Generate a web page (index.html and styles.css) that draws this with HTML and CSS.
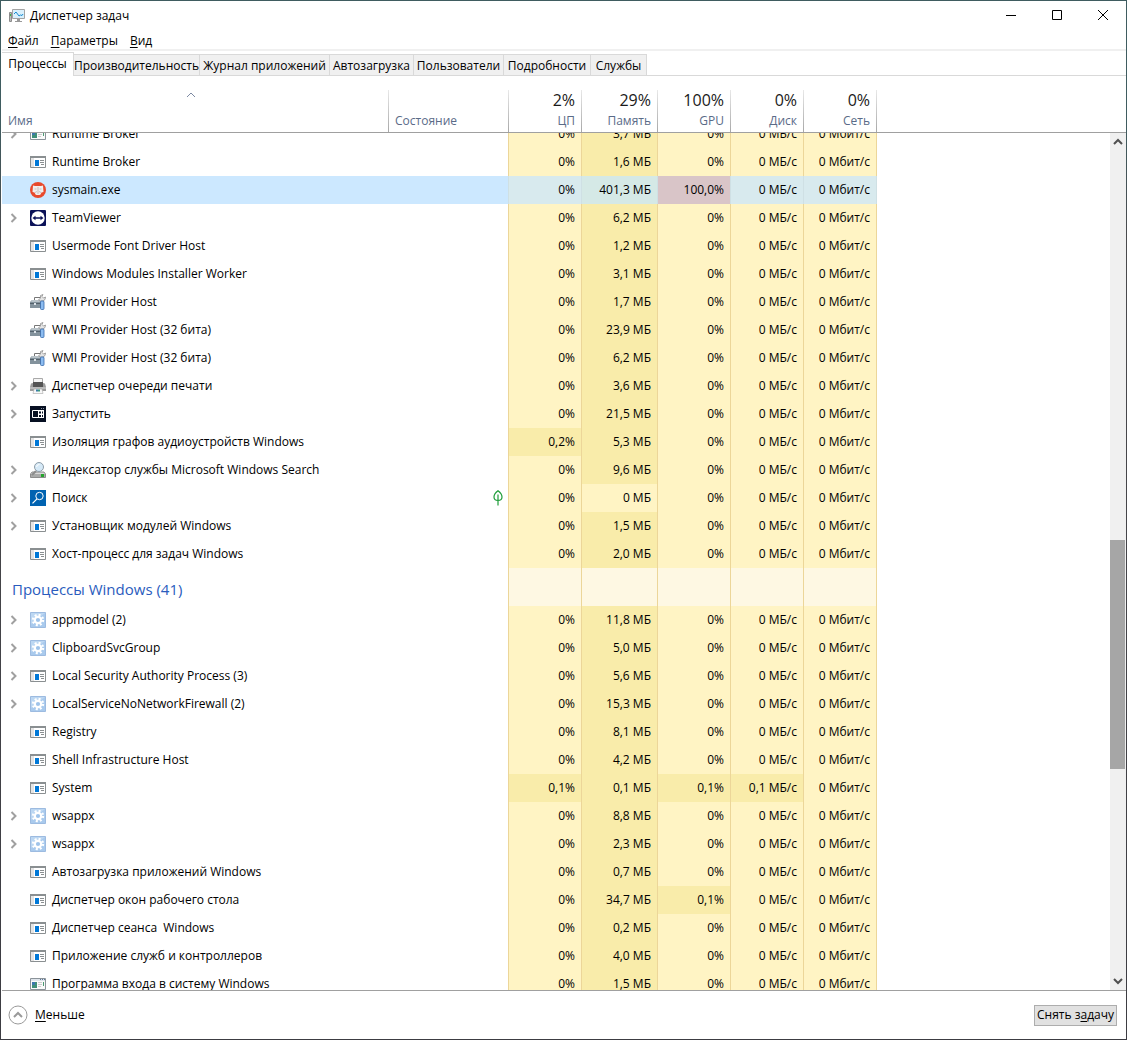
FILE: index.html
```html
<!DOCTYPE html>
<html lang="ru">
<head>
    <meta charset="UTF-8">
    <meta name="viewport" content="width=device-width, initial-scale=1.0">
    <title>Диспетчер задач</title>
    <link rel="stylesheet" href="styles.css">
</head>
<body>
    <!-- иконки -->
    <svg class="sprite" aria-hidden="true">
        <symbol id="i-arrow" viewBox="0 0 8 10">
            <path d="M1.500 1l4 4-4 4" fill="none" stroke="#a0a0a0" stroke-width="2"/>
        </symbol>
        <symbol id="i-app" viewBox="0 0 16 16">
            <path d="M.5 2.500h15v11H.5z" fill="#fff" stroke="#8a8f91"/>
            <path d="M0 2h16v2H0z" fill="#8a8f91"/>
            <path d="M1 4h3v9H1z" fill="#e4e4e4"/>
            <path d="M5 6h4v6H5z" fill="#0078d7"/>
            <path d="M10 6.500h4M10 8.500h4M11 10.500h3" stroke="#8a8f91"/>
        </symbol>
        <symbol id="i-old" viewBox="0 0 16 16">
            <path d="M.5 2.500h15v11H.5z" fill="#fafafa" stroke="#8b9399"/>
            <path d="M1 3h14v2H1z" fill="#dfe5ec"/>
            <path d="M10 3.500h1M12 3.500h1M14 3.500h1" stroke="#5f7897"/>
            <path d="M2 6h5v6H2z" fill="#3f8f78"/>
            <path d="M2 6h3v3H2z" fill="#3d77ad"/>
            <path d="M8 6.500h4M8 8.500h4M8 10.500h3" stroke="#ccc"/>
            <path d="M13.500 6v4" stroke="#4b9a72"/>
        </symbol>
        <symbol id="i-sysmain" viewBox="0 0 16 16">
            <circle cx="8" cy="8" r="8" fill="#e8492c"/>
            <path d="M3 3.500l2 .5h6l2-.5.5 6.500-2 .500-1 2-1 .5H6.500l-1-.5-1-2-2-.5z" fill="#f1eeee"/>
            <path d="M4.500 7h2M9.500 7h2" stroke="#cfc0bd"/>
            <path d="M8 5v7M5.500 11l1-2M10.500 11l-1-2" stroke="#c9bcba" fill="none"/>
        </symbol>
        <symbol id="i-tv" viewBox="0 0 16 16">
            <rect width="16" height="16" rx="1" fill="#0b1258"/>
            <circle cx="8" cy="8" r="6.700" fill="#fff"/>
            <path d="M2.500 8L5.500 5.700v1.500h5V5.700L13.500 8l-3 2.300V8.800h-5v1.500z" fill="#0b1258"/>
        </symbol>
        <symbol id="i-wmi" viewBox="0 0 16 16">
            <path d="M4.500 6V3.500h6" fill="none" stroke="#777"/>
            <path d="M2 6h11l1 2v6H0V8z" fill="#83929c"/>
            <path d="M2 6h9l1 2H1z" fill="#b9c3c9"/>
            <path d="M0 9.500h11" stroke="#53616b"/>
            <path d="M4 9h2v2H4z" fill="#dce3e8"/>
            <path d="M8.500 6l2-2V1.500L13 .5l-1 2 1.500 1.500 2-1-.5 2.500-2 1.500H10z" fill="#e4e4e4" stroke="#858585" stroke-width=".7"/>
            <rect x="10.500" y="7" width="3.500" height="8.500" rx="1" fill="#8cbcf0" stroke="#386aab" stroke-width=".8"/>
        </symbol>
        <symbol id="i-print" viewBox="0 0 16 16">
            <path d="M3.500.5h9v6h-9z" fill="#f5f5f5" stroke="#a9a9a9"/>
            <path d="M1 5.500l2-.5h10l2 .5 1 3.500v4H0V9z" fill="#9c9c9c"/>
            <path d="M3 4h10v5H3z" fill="#555"/>
            <path d="M0 9.500h16v1H0z" fill="#ddd"/>
            <path d="M4 11h8l1 4.500H3z" fill="#f7f7f7" stroke="#aaa" stroke-width=".6"/>
            <path d="M6 11.500h2v2H6z" fill="#3979a8"/>
            <path d="M8 11.500h2v2H8z" fill="#3c9b7b"/>
        </symbol>
        <symbol id="i-start" viewBox="0 0 16 16">
            <path d="M0 0h16v16H0z" fill="#071022"/>
            <path d="M2.500 4.500h11v7h-11z" fill="none" stroke="#fff"/>
            <path d="M8 4h6v8H8z" fill="#fff"/>
            <path d="M9 5.500h2v2H9zM12 5.500h1v2h-1zM9 9h2v2H9zM12 9h1v2h-1z" fill="#071022"/>
            <path d="M11 2.500h1M13 2.500h1" stroke="#8790a0"/>
        </symbol>
        <symbol id="i-index" viewBox="0 0 16 16">
            <path d="M2 10h12l1.500 2v3.500H.5V12z" fill="#d9d9d9" stroke="#757575" stroke-width=".8"/>
            <path d="M1 12h14v3H1z" fill="#a9aaa9"/>
            <path d="M11 12h3v3h-3z" fill="#24a52c"/>
            <path d="M6 9l-4 4" stroke="#8b8b8b" stroke-width="2"/>
            <circle cx="9" cy="5" r="4.500" fill="#d5e9f7" stroke="#8e9da8"/>
            <path d="M6.500 5a3 3 0 0 1 3-2.500" fill="none" stroke="#fff"/>
        </symbol>
        <symbol id="i-search" viewBox="0 0 16 16">
            <path d="M0 0h16v16H0z" fill="#0063b1"/>
            <circle cx="9.500" cy="6" r="3.700" fill="none" stroke="#fff"/>
            <path d="M7 8.800L2.500 13.300" stroke="#fff" stroke-width="1.200"/>
        </symbol>
        <symbol id="i-gear" viewBox="0 0 16 16">
            <path d="M.5.5h15v15H.5z" fill="#a9caed" stroke="#9dbbe0"/>
            <path d="M1 1h14L1 12z" fill="#bcd7f2"/>
            <circle cx="8" cy="8" r="5" fill="none" stroke="#fff" stroke-width="2.400" stroke-dasharray="1.960 1.960"/>
            <circle cx="8" cy="8" r="3.200" fill="#9fc3ea" stroke="#fff" stroke-width="2.200"/>
        </symbol>
        <symbol id="i-leaf" viewBox="0 0 10 16">
            <path d="M5 .8C2.500 2.700 1 4.500 1 7c0 2 1.500 3.500 4 3.500S9 9 9 7C9 4.500 7.500 2.700 5 .8zM5 4.500v11" fill="none" stroke="#1f9d3a" stroke-width="1.200"/>
        </symbol>
    </svg>

    <div class="window">
        <header class="titlebar">
            <svg class="app-icon" viewBox="0 0 16 16" aria-hidden="true">
                <path d="M.5 4.500h2v9h-2z" fill="#bcbcbc" stroke="#8c8c8c"/>
                <path d="M1 6h1v2H1z" fill="#39b54a"/>
                <path d="M3.500 1.500h12v9h-12z" fill="#d9f0fc" stroke="#a3a3a3"/>
                <path d="M5 6l2-2 3 4 1.500-1 1.500.5 1-1.500" fill="none" stroke="#178bd0"/>
                <path d="M8 11h3v2h2v1H6v-1h2z" fill="#999"/>
            </svg>
            <h1 class="title">Диспетчер задач</h1>
            <div class="window-buttons">
                <button type="button" aria-label="Свернуть"><svg viewBox="0 0 12 12"><path d="M1 5.500h10"/></svg></button>
                <button type="button" aria-label="Развернуть"><svg viewBox="0 0 12 12"><path d="M1.500.5h9v9h-9z"/></svg></button>
                <button type="button" aria-label="Закрыть"><svg viewBox="0 0 12 12"><path d="M1 0l10 10M11 0L1 10"/></svg></button>
            </div>
        </header>

        <nav class="menu">
            <button type="button"><u>Ф</u>айл</button>
            <button type="button"><u>П</u>араметры</button>
            <button type="button"><u>В</u>ид</button>
        </nav>

        <div class="tabs" role="tablist">
            <button type="button" class="tab active" role="tab" aria-selected="true">Процессы</button>
            <button type="button" class="tab" role="tab">Производительность</button>
            <button type="button" class="tab" role="tab">Журнал приложений</button>
            <button type="button" class="tab" role="tab">Автозагрузка</button>
            <button type="button" class="tab" role="tab">Пользователи</button>
            <button type="button" class="tab" role="tab">Подробности</button>
            <button type="button" class="tab" role="tab">Службы</button>
        </div>

        <main class="panel">
            <div class="list" id="list">
                <table class="processes">
                    <colgroup>
                        <col class="col-name"><col class="col-status"><col class="col-num"><col class="col-mem">
                        <col class="col-num"><col class="col-num"><col class="col-num"><col>
                    </colgroup>
                    <thead>
                        <tr>
                            <th class="left" aria-sort="ascending"><svg class="sort" viewBox="0 0 10 6" aria-hidden="true"><path d="M1 5l4-4 4 4"/></svg>Имя</th>
                            <th class="left">Состояние</th>
                            <th><b>2%</b>ЦП</th>
                            <th><b>29%</b>Память</th>
                            <th><b>100%</b>GPU</th>
                            <th><b>0%</b>Диск</th>
                            <th><b>0%</b>Сеть</th>
                            <th class="rest"></th>
                        </tr>
                    </thead>
                    <tbody>
                        <tr>
                            <td><div class="name"><button type="button" class="expand" aria-label="Развернуть"><svg><use href="#i-arrow"/></svg></button><svg class="icon"><use href="#i-old"/></svg>Runtime Broker</div></td>
                            <td></td><td>0%</td><td class="warm">3,7 МБ</td><td>0%</td><td>0 МБ/с</td><td>0 Мбит/с</td><td></td>
                        </tr>
                        <tr>
                            <td><div class="name"><svg class="icon"><use href="#i-app"/></svg>Runtime Broker</div></td>
                            <td></td><td>0%</td><td class="warm">1,6 МБ</td><td>0%</td><td>0 МБ/с</td><td>0 Мбит/с</td><td></td>
                        </tr>
                        <tr class="selected">
                            <td><div class="name"><svg class="icon"><use href="#i-sysmain"/></svg>sysmain.exe</div></td>
                            <td></td><td>0%</td><td class="warm">401,3 МБ</td><td class="hot">100,0%</td><td>0 МБ/с</td><td>0 Мбит/с</td><td></td>
                        </tr>
                        <tr>
                            <td><div class="name"><button type="button" class="expand" aria-label="Развернуть"><svg><use href="#i-arrow"/></svg></button><svg class="icon"><use href="#i-tv"/></svg>TeamViewer</div></td>
                            <td></td><td>0%</td><td class="warm">6,2 МБ</td><td>0%</td><td>0 МБ/с</td><td>0 Мбит/с</td><td></td>
                        </tr>
                        <tr>
                            <td><div class="name"><svg class="icon"><use href="#i-app"/></svg>Usermode Font Driver Host</div></td>
                            <td></td><td>0%</td><td class="warm">1,2 МБ</td><td>0%</td><td>0 МБ/с</td><td>0 Мбит/с</td><td></td>
                        </tr>
                        <tr>
                            <td><div class="name"><svg class="icon"><use href="#i-app"/></svg>Windows Modules Installer Worker</div></td>
                            <td></td><td>0%</td><td class="warm">3,1 МБ</td><td>0%</td><td>0 МБ/с</td><td>0 Мбит/с</td><td></td>
                        </tr>
                        <tr>
                            <td><div class="name"><svg class="icon"><use href="#i-wmi"/></svg>WMI Provider Host</div></td>
                            <td></td><td>0%</td><td class="warm">1,7 МБ</td><td>0%</td><td>0 МБ/с</td><td>0 Мбит/с</td><td></td>
                        </tr>
                        <tr>
                            <td><div class="name"><svg class="icon"><use href="#i-wmi"/></svg>WMI Provider Host (32 бита)</div></td>
                            <td></td><td>0%</td><td class="warm">23,9 МБ</td><td>0%</td><td>0 МБ/с</td><td>0 Мбит/с</td><td></td>
                        </tr>
                        <tr>
                            <td><div class="name"><svg class="icon"><use href="#i-wmi"/></svg>WMI Provider Host (32 бита)</div></td>
                            <td></td><td>0%</td><td class="warm">6,2 МБ</td><td>0%</td><td>0 МБ/с</td><td>0 Мбит/с</td><td></td>
                        </tr>
                        <tr>
                            <td><div class="name"><button type="button" class="expand" aria-label="Развернуть"><svg><use href="#i-arrow"/></svg></button><svg class="icon"><use href="#i-print"/></svg>Диспетчер очереди печати</div></td>
                            <td></td><td>0%</td><td class="warm">3,6 МБ</td><td>0%</td><td>0 МБ/с</td><td>0 Мбит/с</td><td></td>
                        </tr>
                        <tr>
                            <td><div class="name"><button type="button" class="expand" aria-label="Развернуть"><svg><use href="#i-arrow"/></svg></button><svg class="icon"><use href="#i-start"/></svg>Запустить</div></td>
                            <td></td><td>0%</td><td class="warm">21,5 МБ</td><td>0%</td><td>0 МБ/с</td><td>0 Мбит/с</td><td></td>
                        </tr>
                        <tr>
                            <td><div class="name"><svg class="icon"><use href="#i-app"/></svg>Изоляция графов аудиоустройств Windows</div></td>
                            <td></td><td class="warm">0,2%</td><td class="warm">5,3 МБ</td><td>0%</td><td>0 МБ/с</td><td>0 Мбит/с</td><td></td>
                        </tr>
                        <tr>
                            <td><div class="name"><button type="button" class="expand" aria-label="Развернуть"><svg><use href="#i-arrow"/></svg></button><svg class="icon"><use href="#i-index"/></svg>Индексатор службы Microsoft Windows Search</div></td>
                            <td></td><td>0%</td><td class="warm">9,6 МБ</td><td>0%</td><td>0 МБ/с</td><td>0 Мбит/с</td><td></td>
                        </tr>
                        <tr>
                            <td><div class="name"><button type="button" class="expand" aria-label="Развернуть"><svg><use href="#i-arrow"/></svg></button><svg class="icon"><use href="#i-search"/></svg>Поиск</div></td>
                            <td><svg class="leaf"><use href="#i-leaf"/></svg></td><td>0%</td><td>0 МБ</td><td>0%</td><td>0 МБ/с</td><td>0 Мбит/с</td><td></td>
                        </tr>
                        <tr>
                            <td><div class="name"><button type="button" class="expand" aria-label="Развернуть"><svg><use href="#i-arrow"/></svg></button><svg class="icon"><use href="#i-app"/></svg>Установщик модулей Windows</div></td>
                            <td></td><td>0%</td><td class="warm">1,5 МБ</td><td>0%</td><td>0 МБ/с</td><td>0 Мбит/с</td><td></td>
                        </tr>
                        <tr>
                            <td><div class="name"><svg class="icon"><use href="#i-app"/></svg>Хост-процесс для задач Windows</div></td>
                            <td></td><td>0%</td><td class="warm">2,0 МБ</td><td>0%</td><td>0 МБ/с</td><td>0 Мбит/с</td><td></td>
                        </tr>

                        <!-- процессы Windows -->
                        <tr class="group">
                            <td>Процессы Windows (41)</td><td></td><td></td><td></td><td></td><td></td><td></td><td></td>
                        </tr>
                        <tr>
                            <td><div class="name"><button type="button" class="expand" aria-label="Развернуть"><svg><use href="#i-arrow"/></svg></button><svg class="icon"><use href="#i-gear"/></svg>appmodel (2)</div></td>
                            <td></td><td>0%</td><td class="warm">11,8 МБ</td><td>0%</td><td>0 МБ/с</td><td>0 Мбит/с</td><td></td>
                        </tr>
                        <tr>
                            <td><div class="name"><button type="button" class="expand" aria-label="Развернуть"><svg><use href="#i-arrow"/></svg></button><svg class="icon"><use href="#i-gear"/></svg>ClipboardSvcGroup</div></td>
                            <td></td><td>0%</td><td class="warm">5,0 МБ</td><td>0%</td><td>0 МБ/с</td><td>0 Мбит/с</td><td></td>
                        </tr>
                        <tr>
                            <td><div class="name"><button type="button" class="expand" aria-label="Развернуть"><svg><use href="#i-arrow"/></svg></button><svg class="icon"><use href="#i-app"/></svg>Local Security Authority Process (3)</div></td>
                            <td></td><td>0%</td><td class="warm">5,6 МБ</td><td>0%</td><td>0 МБ/с</td><td>0 Мбит/с</td><td></td>
                        </tr>
                        <tr>
                            <td><div class="name"><button type="button" class="expand" aria-label="Развернуть"><svg><use href="#i-arrow"/></svg></button><svg class="icon"><use href="#i-gear"/></svg>LocalServiceNoNetworkFirewall (2)</div></td>
                            <td></td><td>0%</td><td class="warm">15,3 МБ</td><td>0%</td><td>0 МБ/с</td><td>0 Мбит/с</td><td></td>
                        </tr>
                        <tr>
                            <td><div class="name"><svg class="icon"><use href="#i-app"/></svg>Registry</div></td>
                            <td></td><td>0%</td><td class="warm">8,1 МБ</td><td>0%</td><td>0 МБ/с</td><td>0 Мбит/с</td><td></td>
                        </tr>
                        <tr>
                            <td><div class="name"><svg class="icon"><use href="#i-app"/></svg>Shell Infrastructure Host</div></td>
                            <td></td><td>0%</td><td class="warm">4,2 МБ</td><td>0%</td><td>0 МБ/с</td><td>0 Мбит/с</td><td></td>
                        </tr>
                        <tr>
                            <td><div class="name"><svg class="icon"><use href="#i-app"/></svg>System</div></td>
                            <td></td><td class="warm">0,1%</td><td class="warm">0,1 МБ</td><td class="warm">0,1%</td><td class="warm">0,1 МБ/с</td><td>0 Мбит/с</td><td></td>
                        </tr>
                        <tr>
                            <td><div class="name"><button type="button" class="expand" aria-label="Развернуть"><svg><use href="#i-arrow"/></svg></button><svg class="icon"><use href="#i-gear"/></svg>wsappx</div></td>
                            <td></td><td>0%</td><td class="warm">8,8 МБ</td><td>0%</td><td>0 МБ/с</td><td>0 Мбит/с</td><td></td>
                        </tr>
                        <tr>
                            <td><div class="name"><button type="button" class="expand" aria-label="Развернуть"><svg><use href="#i-arrow"/></svg></button><svg class="icon"><use href="#i-gear"/></svg>wsappx</div></td>
                            <td></td><td>0%</td><td class="warm">2,3 МБ</td><td>0%</td><td>0 МБ/с</td><td>0 Мбит/с</td><td></td>
                        </tr>
                        <tr>
                            <td><div class="name"><svg class="icon"><use href="#i-app"/></svg>Автозагрузка приложений Windows</div></td>
                            <td></td><td>0%</td><td class="warm">0,7 МБ</td><td>0%</td><td>0 МБ/с</td><td>0 Мбит/с</td><td></td>
                        </tr>
                        <tr>
                            <td><div class="name"><svg class="icon"><use href="#i-app"/></svg>Диспетчер окон рабочего стола</div></td>
                            <td></td><td>0%</td><td class="warm">34,7 МБ</td><td class="warm">0,1%</td><td>0 МБ/с</td><td>0 Мбит/с</td><td></td>
                        </tr>
                        <tr>
                            <td><div class="name"><svg class="icon"><use href="#i-app"/></svg>Диспетчер сеанса&nbsp; Windows</div></td>
                            <td></td><td>0%</td><td class="warm">0,2 МБ</td><td>0%</td><td>0 МБ/с</td><td>0 Мбит/с</td><td></td>
                        </tr>
                        <tr>
                            <td><div class="name"><svg class="icon"><use href="#i-app"/></svg>Приложение служб и контроллеров</div></td>
                            <td></td><td>0%</td><td class="warm">4,0 МБ</td><td>0%</td><td>0 МБ/с</td><td>0 Мбит/с</td><td></td>
                        </tr>
                        <tr>
                            <td><div class="name"><svg class="icon"><use href="#i-old"/></svg>Программа входа в систему Windows</div></td>
                            <td></td><td>0%</td><td class="warm">1,5 МБ</td><td>0%</td><td>0 МБ/с</td><td>0 Мбит/с</td><td></td>
                        </tr>
                    </tbody>
                </table>
            </div>

            <div class="scrollbar" aria-hidden="true">
                <svg class="scroll-arrow" viewBox="0 0 16 17"><path d="M4 11l4-4 4 4"/></svg>
                <div class="scroll-track"><div class="scroll-thumb"></div></div>
                <svg class="scroll-arrow" viewBox="0 0 16 17"><path d="M4 6l4 4 4-4"/></svg>
            </div>
        </main>

        <footer class="footer">
            <button type="button" class="less">
                <svg viewBox="0 0 20 20" aria-hidden="true"><circle cx="10" cy="10" r="9"/><path d="M6 12l4-4 4 4"/></svg>
                <span><u>М</u>еньше</span>
            </button>
            <button type="button" class="end-task">Снять з<u>а</u>дачу</button>
        </footer>
    </div>

    <script>
        // первая строка видна наполовину
        document.getElementById('list').scrollTop = 13;
    </script>
</body>
</html>
```
FILE: styles.css
```css
* {
    margin: 0;
    padding: 0;
    box-sizing: border-box;
}

body {
    height: 100vh;
    padding: 1px;
    background: linear-gradient(#3f5c60 0, #3f5c60 120px, #4a4a4d 240px, #3c3c42 100%);
    font-family: "Open Sans", "Noto Sans", sans-serif;
    font-size: 12px;
    line-height: 16px;
    color: #000;
}

button {
    font: inherit;
    color: inherit;
    background: none;
    border: none;
}

.sprite {
    position: absolute;
    width: 0;
    height: 0;
}

.window {
    display: flex;
    flex-direction: column;
    height: 100%;
    padding-left: 1px;
    background: #fff;
}

/* заголовок окна */
.titlebar {
    display: flex;
    align-items: center;
    height: 30px;
    padding-left: 7px;
}

.app-icon {
    width: 16px;
    height: 16px;
    margin-right: 5px;
}

.title {
    flex: 1;
    font-size: 12px;
    font-weight: 400;
}

.window-buttons {
    display: flex;
}

.window-buttons button {
    display: flex;
    align-items: center;
    justify-content: center;
    width: 46px;
    height: 30px;
}

.window-buttons svg {
    width: 12px;
    height: 12px;
    fill: none;
    stroke: #000;
}

.menu {
    display: flex;
    gap: 12px;
    height: 20px;
    padding: 2px 0 0 6px;
    border-bottom: 2px solid #f0f0f0;
}

.menu u,
.footer u {
    text-underline-offset: 2px;
}

/* вкладки */
.tabs {
    display: grid;
    grid-template-columns: 72px 126px 130px 84px 90px 87px 56px 1fr;
    align-items: end;
    height: 25px;
    border-bottom: 1px solid #d9d9d9;
}

.tab {
    height: 21px;
    padding-top: 1px;
    background: #f0f0f0;
    border: 1px solid #d9d9d9;
    border-left: none;
    border-bottom: none;
    white-space: nowrap;
}

.tab.active {
    height: 24px;
    margin-bottom: -1px;
    padding: 0 0 2px;
    background: #fff;
}

/* список процессов */
.panel {
    position: relative;
    flex: 1;
    min-height: 0;
    border-bottom: 1px solid #a0a0a0;
}

.list {
    height: 100%;
    overflow: hidden;
}

.processes {
    width: 100%;
    table-layout: fixed;
    border-collapse: separate;
    border-spacing: 0;
}

.col-name {
    width: 387px;
}

.col-status {
    width: 120px;
}

.col-num {
    width: 73px;
}

.col-mem {
    width: 76px;
}

th {
    position: sticky;
    top: 0;
    z-index: 1;
    height: 57px;
    padding: 0 7px 3px 6px;
    background: linear-gradient(#e8e8e8, #a8a8a8) right 0 top 14px / 1px 42px no-repeat, #fff;
    border-bottom: 1px solid #a0a0a0;
    color: #5a6b88;
    font-weight: 400;
    text-align: right;
    vertical-align: bottom;
}

th.left {
    text-align: left;
}

th.rest {
    background: #fff;
}

th b {
    display: block;
    margin-bottom: 3px;
    color: #1a1a1a;
    font-size: 16px;
    font-weight: 400;
    line-height: 20px;
}

.sort {
    display: block;
    width: 10px;
    height: 6px;
    margin: 0 0 15px 178px;
    fill: none;
    stroke: #7d8aa3;
}

td {
    height: 28px;
    padding: 0 6px 0 0;
    background: #fff4c4;
    border-right: 1px solid #ecd699;
    text-align: right;
    white-space: nowrap;
}

td:first-child,
td:last-child {
    padding: 0;
    background: none;
    border-right: none;
    text-align: left;
}

td:nth-child(2) {
    padding-right: 5px;
    background: none;
}

.warm {
    background: #f9ecaa;
}

.name {
    display: flex;
    align-items: center;
    padding-left: 28px;
}

.expand {
    width: 28px;
    height: 16px;
    margin-left: -28px;
    padding-left: 8px;
    text-align: left;
}

.expand svg {
    display: block;
    width: 8px;
    height: 16px;
}

.icon {
    flex-shrink: 0;
    width: 16px;
    height: 16px;
    margin-right: 6px;
}

.leaf {
    display: inline-block;
    width: 10px;
    height: 16px;
    vertical-align: middle;
}

.selected td {
    background: #d8eaee;
    border-color: #cfe0e4;
}

.selected td:first-child,
.selected td:nth-child(2) {
    background: #cce8ff;
}

.selected td:last-child {
    background: none;
}

.selected .warm {
    background: #d5e9e6;
}

.selected .hot {
    background: #d9c5c8;
}

.group td {
    height: 38px;
    background: #fef8e3;
}

.group td:first-child {
    padding: 4px 0 0 10px;
    background: none;
    color: #2a5cbd;
    font-size: 15px;
}

.group td:nth-child(2),
.group td:last-child {
    background: none;
}

/* полоса прокрутки лежит поверх списка, под шапкой */
.scrollbar {
    position: absolute;
    top: 57px;
    right: 0;
    bottom: 0;
    display: flex;
    flex-direction: column;
    width: 16px;
    background: #f0f0f0;
}

.scroll-arrow {
    width: 16px;
    height: 17px;
    fill: none;
    stroke: #505050;
    stroke-width: 2;
}

.scroll-track {
    display: flex;
    flex-direction: column;
    flex: 1;
    padding-right: 1px;
}

.scroll-track::before {
    content: "";
    flex: 390;
}

.scroll-track::after {
    content: "";
    flex: 204;
}

.scroll-thumb {
    flex: 229;
    background: #a6a6a6;
}

/* нижняя панель */
.footer {
    display: flex;
    align-items: center;
    justify-content: space-between;
    height: 48px;
    padding: 0 9px 0 6px;
}

.less {
    display: flex;
    align-items: center;
    gap: 7px;
}

.less svg {
    width: 20px;
    height: 20px;
    fill: none;
    stroke: #9a9a9a;
}

.less path {
    stroke-width: 2;
}

.end-task {
    width: 83px;
    height: 21px;
    background: #e1e1e1;
    border: 1px solid #adadad;
    white-space: nowrap;
}
```
